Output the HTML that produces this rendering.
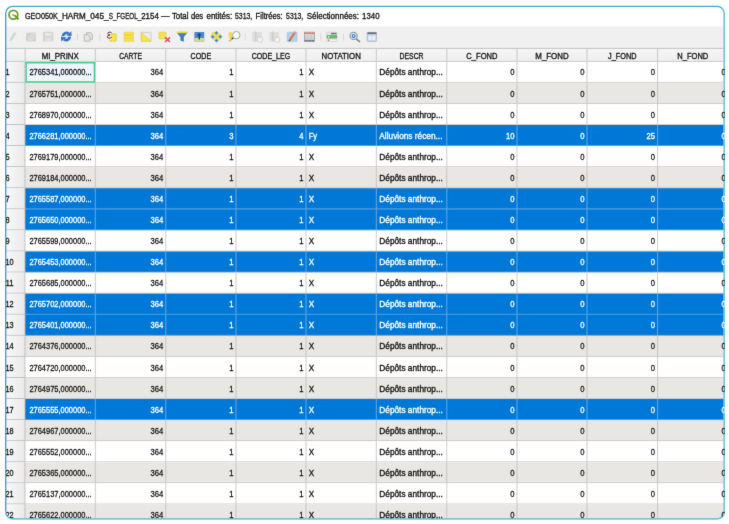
<!DOCTYPE html>
<html><head><meta charset="utf-8"><title>Table attributaire</title>
<style>
html,body{margin:0;padding:0;background:#fff;}
body{width:729px;height:524px;overflow:hidden;}
svg{display:block;}
text{font-family:"Liberation Sans","DejaVu Sans",sans-serif;font-size:9.0px;fill:#151515;stroke:#151515;stroke-width:0.34px;}
.w{fill:#fff;stroke:#fff;}
.n{font-size:9.5px;fill:#161616;stroke:#161616;stroke-width:0.3px;}
.n.w{fill:#fff;stroke:#fff;stroke-width:0.34px;}
.hd{fill:#151515;stroke:#151515;stroke-width:0.34px;}
</style></head><body>
<svg width="729" height="524" viewBox="0 0 729 524">
<defs>
<clipPath id="cl"><rect x="6.2" y="6.8" width="717.6" height="511.8" rx="6.8"/></clipPath>
<clipPath id="ct"><rect x="6.2" y="6.8" width="718.4" height="511.8" rx="6.8"/></clipPath>
<linearGradient id="rh" x1="0" x2="1" y1="0" y2="0"><stop offset="0.3" stop-color="#f7f7f7"/><stop offset="1" stop-color="#eaeaea"/></linearGradient>
<linearGradient id="hg" x1="0" x2="0" y1="0" y2="1"><stop offset="0" stop-color="#f6f6f6"/><stop offset="1" stop-color="#eeeeee"/></linearGradient>
</defs>
<filter id="bl" x="-6" y="-6" width="741" height="536" filterUnits="userSpaceOnUse" color-interpolation-filters="sRGB"><feConvolveMatrix order="3" kernelMatrix="0.0074 0.0713 0.0074 0.0713 0.6853 0.0713 0.0074 0.0713 0.0074" divisor="1" edgeMode="duplicate" preserveAlpha="true"/></filter>
<rect width="729" height="524" fill="#fff"/>
<g filter="url(#bl)">
<rect x="-6" y="-6" width="741" height="536" fill="#fff"/>
<g clip-path="url(#cl)">
<rect x="0" y="0" width="729" height="26.5" fill="#fff"/>
<rect x="0" y="26.5" width="729" height="21.6" fill="#f0f0f0"/>

<rect x="0" y="48.0" width="729" height="13.8" fill="url(#hg)"/>
<rect x="0" y="47.9" width="729" height="0.9" fill="#bdbdbd"/>
<rect x="0" y="60.95" width="729" height="0.9" fill="#b9b9b9"/>
<rect x="24.7" y="48.6" width="1" height="12.6" fill="#c6c6c6"/>
<rect x="94.8" y="48.6" width="1" height="12.6" fill="#c6c6c6"/>
<rect x="165.3" y="48.6" width="1" height="12.6" fill="#c6c6c6"/>
<rect x="235.5" y="48.6" width="1" height="12.6" fill="#c6c6c6"/>
<rect x="305.5" y="48.6" width="1" height="12.6" fill="#c6c6c6"/>
<rect x="375.8" y="48.6" width="1" height="12.6" fill="#c6c6c6"/>
<rect x="446.3" y="48.6" width="1" height="12.6" fill="#c6c6c6"/>
<rect x="516.5" y="48.6" width="1" height="12.6" fill="#c6c6c6"/>
<rect x="586.5" y="48.6" width="1" height="12.6" fill="#c6c6c6"/>
<rect x="657.1" y="48.6" width="1" height="12.6" fill="#c6c6c6"/>
<rect x="25" y="61.75" width="704" height="21.13" fill="#ffffff"/>
<rect x="0" y="61.75" width="25" height="21.13" fill="url(#rh)"/>
<rect x="0" y="81.93" width="25" height="0.9" fill="#bcbcbc"/>
<rect x="25.4" y="81.93" width="704" height="0.9" fill="#cccccc"/>
<rect x="94.8" y="61.75" width="1" height="21.08" fill="#cccccc"/>
<rect x="165.3" y="61.75" width="1" height="21.08" fill="#cccccc"/>
<rect x="235.5" y="61.75" width="1" height="21.08" fill="#cccccc"/>
<rect x="305.5" y="61.75" width="1" height="21.08" fill="#cccccc"/>
<rect x="375.8" y="61.75" width="1" height="21.08" fill="#cccccc"/>
<rect x="446.3" y="61.75" width="1" height="21.08" fill="#cccccc"/>
<rect x="516.5" y="61.75" width="1" height="21.08" fill="#cccccc"/>
<rect x="586.5" y="61.75" width="1" height="21.08" fill="#cccccc"/>
<rect x="657.1" y="61.75" width="1" height="21.08" fill="#cccccc"/>
<rect x="25" y="82.83" width="704" height="21.13" fill="#e9e7e3"/>
<rect x="0" y="82.83" width="25" height="21.13" fill="url(#rh)"/>
<rect x="0" y="103.01" width="25" height="0.9" fill="#bcbcbc"/>
<rect x="25.4" y="103.01" width="704" height="0.9" fill="#c6c5c2"/>
<rect x="94.8" y="82.83" width="1" height="21.08" fill="#c6c5c2"/>
<rect x="165.3" y="82.83" width="1" height="21.08" fill="#c6c5c2"/>
<rect x="235.5" y="82.83" width="1" height="21.08" fill="#c6c5c2"/>
<rect x="305.5" y="82.83" width="1" height="21.08" fill="#c6c5c2"/>
<rect x="375.8" y="82.83" width="1" height="21.08" fill="#c6c5c2"/>
<rect x="446.3" y="82.83" width="1" height="21.08" fill="#c6c5c2"/>
<rect x="516.5" y="82.83" width="1" height="21.08" fill="#c6c5c2"/>
<rect x="586.5" y="82.83" width="1" height="21.08" fill="#c6c5c2"/>
<rect x="657.1" y="82.83" width="1" height="21.08" fill="#c6c5c2"/>
<rect x="25" y="103.91" width="704" height="21.13" fill="#ffffff"/>
<rect x="0" y="103.91" width="25" height="21.13" fill="url(#rh)"/>
<rect x="0" y="124.09" width="25" height="0.9" fill="#bcbcbc"/>
<rect x="25.4" y="124.09" width="704" height="0.9" fill="#cccccc"/>
<rect x="94.8" y="103.91" width="1" height="21.08" fill="#cccccc"/>
<rect x="165.3" y="103.91" width="1" height="21.08" fill="#cccccc"/>
<rect x="235.5" y="103.91" width="1" height="21.08" fill="#cccccc"/>
<rect x="305.5" y="103.91" width="1" height="21.08" fill="#cccccc"/>
<rect x="375.8" y="103.91" width="1" height="21.08" fill="#cccccc"/>
<rect x="446.3" y="103.91" width="1" height="21.08" fill="#cccccc"/>
<rect x="516.5" y="103.91" width="1" height="21.08" fill="#cccccc"/>
<rect x="586.5" y="103.91" width="1" height="21.08" fill="#cccccc"/>
<rect x="657.1" y="103.91" width="1" height="21.08" fill="#cccccc"/>
<rect x="25" y="124.99" width="704" height="21.13" fill="#0078d7"/>
<rect x="0" y="124.99" width="25" height="21.13" fill="url(#rh)"/>
<rect x="0" y="145.17" width="25" height="0.9" fill="#bcbcbc"/>
<rect x="25.4" y="145.17" width="704" height="0.9" fill="#62a8e6"/>
<rect x="94.8" y="124.99" width="1" height="21.08" fill="#62a8e6"/>
<rect x="165.3" y="124.99" width="1" height="21.08" fill="#62a8e6"/>
<rect x="235.5" y="124.99" width="1" height="21.08" fill="#62a8e6"/>
<rect x="305.5" y="124.99" width="1" height="21.08" fill="#62a8e6"/>
<rect x="375.8" y="124.99" width="1" height="21.08" fill="#62a8e6"/>
<rect x="446.3" y="124.99" width="1" height="21.08" fill="#62a8e6"/>
<rect x="516.5" y="124.99" width="1" height="21.08" fill="#62a8e6"/>
<rect x="586.5" y="124.99" width="1" height="21.08" fill="#62a8e6"/>
<rect x="657.1" y="124.99" width="1" height="21.08" fill="#62a8e6"/>
<rect x="25" y="146.07" width="704" height="21.13" fill="#ffffff"/>
<rect x="0" y="146.07" width="25" height="21.13" fill="url(#rh)"/>
<rect x="0" y="166.25" width="25" height="0.9" fill="#bcbcbc"/>
<rect x="25.4" y="166.25" width="704" height="0.9" fill="#cccccc"/>
<rect x="94.8" y="146.07" width="1" height="21.08" fill="#cccccc"/>
<rect x="165.3" y="146.07" width="1" height="21.08" fill="#cccccc"/>
<rect x="235.5" y="146.07" width="1" height="21.08" fill="#cccccc"/>
<rect x="305.5" y="146.07" width="1" height="21.08" fill="#cccccc"/>
<rect x="375.8" y="146.07" width="1" height="21.08" fill="#cccccc"/>
<rect x="446.3" y="146.07" width="1" height="21.08" fill="#cccccc"/>
<rect x="516.5" y="146.07" width="1" height="21.08" fill="#cccccc"/>
<rect x="586.5" y="146.07" width="1" height="21.08" fill="#cccccc"/>
<rect x="657.1" y="146.07" width="1" height="21.08" fill="#cccccc"/>
<rect x="25" y="167.15" width="704" height="21.13" fill="#e9e7e3"/>
<rect x="0" y="167.15" width="25" height="21.13" fill="url(#rh)"/>
<rect x="0" y="187.33" width="25" height="0.9" fill="#bcbcbc"/>
<rect x="25.4" y="187.33" width="704" height="0.9" fill="#c6c5c2"/>
<rect x="94.8" y="167.15" width="1" height="21.08" fill="#c6c5c2"/>
<rect x="165.3" y="167.15" width="1" height="21.08" fill="#c6c5c2"/>
<rect x="235.5" y="167.15" width="1" height="21.08" fill="#c6c5c2"/>
<rect x="305.5" y="167.15" width="1" height="21.08" fill="#c6c5c2"/>
<rect x="375.8" y="167.15" width="1" height="21.08" fill="#c6c5c2"/>
<rect x="446.3" y="167.15" width="1" height="21.08" fill="#c6c5c2"/>
<rect x="516.5" y="167.15" width="1" height="21.08" fill="#c6c5c2"/>
<rect x="586.5" y="167.15" width="1" height="21.08" fill="#c6c5c2"/>
<rect x="657.1" y="167.15" width="1" height="21.08" fill="#c6c5c2"/>
<rect x="25" y="188.23" width="704" height="21.13" fill="#0078d7"/>
<rect x="0" y="188.23" width="25" height="21.13" fill="url(#rh)"/>
<rect x="0" y="208.41" width="25" height="0.9" fill="#bcbcbc"/>
<rect x="25.4" y="208.41" width="704" height="0.9" fill="#62a8e6"/>
<rect x="94.8" y="188.23" width="1" height="21.08" fill="#62a8e6"/>
<rect x="165.3" y="188.23" width="1" height="21.08" fill="#62a8e6"/>
<rect x="235.5" y="188.23" width="1" height="21.08" fill="#62a8e6"/>
<rect x="305.5" y="188.23" width="1" height="21.08" fill="#62a8e6"/>
<rect x="375.8" y="188.23" width="1" height="21.08" fill="#62a8e6"/>
<rect x="446.3" y="188.23" width="1" height="21.08" fill="#62a8e6"/>
<rect x="516.5" y="188.23" width="1" height="21.08" fill="#62a8e6"/>
<rect x="586.5" y="188.23" width="1" height="21.08" fill="#62a8e6"/>
<rect x="657.1" y="188.23" width="1" height="21.08" fill="#62a8e6"/>
<rect x="25" y="209.31" width="704" height="21.13" fill="#0078d7"/>
<rect x="0" y="209.31" width="25" height="21.13" fill="url(#rh)"/>
<rect x="0" y="229.49" width="25" height="0.9" fill="#bcbcbc"/>
<rect x="25.4" y="229.49" width="704" height="0.9" fill="#62a8e6"/>
<rect x="94.8" y="209.31" width="1" height="21.08" fill="#62a8e6"/>
<rect x="165.3" y="209.31" width="1" height="21.08" fill="#62a8e6"/>
<rect x="235.5" y="209.31" width="1" height="21.08" fill="#62a8e6"/>
<rect x="305.5" y="209.31" width="1" height="21.08" fill="#62a8e6"/>
<rect x="375.8" y="209.31" width="1" height="21.08" fill="#62a8e6"/>
<rect x="446.3" y="209.31" width="1" height="21.08" fill="#62a8e6"/>
<rect x="516.5" y="209.31" width="1" height="21.08" fill="#62a8e6"/>
<rect x="586.5" y="209.31" width="1" height="21.08" fill="#62a8e6"/>
<rect x="657.1" y="209.31" width="1" height="21.08" fill="#62a8e6"/>
<rect x="25" y="230.39" width="704" height="21.13" fill="#ffffff"/>
<rect x="0" y="230.39" width="25" height="21.13" fill="url(#rh)"/>
<rect x="0" y="250.57" width="25" height="0.9" fill="#bcbcbc"/>
<rect x="25.4" y="250.57" width="704" height="0.9" fill="#cccccc"/>
<rect x="94.8" y="230.39" width="1" height="21.08" fill="#cccccc"/>
<rect x="165.3" y="230.39" width="1" height="21.08" fill="#cccccc"/>
<rect x="235.5" y="230.39" width="1" height="21.08" fill="#cccccc"/>
<rect x="305.5" y="230.39" width="1" height="21.08" fill="#cccccc"/>
<rect x="375.8" y="230.39" width="1" height="21.08" fill="#cccccc"/>
<rect x="446.3" y="230.39" width="1" height="21.08" fill="#cccccc"/>
<rect x="516.5" y="230.39" width="1" height="21.08" fill="#cccccc"/>
<rect x="586.5" y="230.39" width="1" height="21.08" fill="#cccccc"/>
<rect x="657.1" y="230.39" width="1" height="21.08" fill="#cccccc"/>
<rect x="25" y="251.47" width="704" height="21.13" fill="#0078d7"/>
<rect x="0" y="251.47" width="25" height="21.13" fill="url(#rh)"/>
<rect x="0" y="271.65" width="25" height="0.9" fill="#bcbcbc"/>
<rect x="25.4" y="271.65" width="704" height="0.9" fill="#62a8e6"/>
<rect x="94.8" y="251.47" width="1" height="21.08" fill="#62a8e6"/>
<rect x="165.3" y="251.47" width="1" height="21.08" fill="#62a8e6"/>
<rect x="235.5" y="251.47" width="1" height="21.08" fill="#62a8e6"/>
<rect x="305.5" y="251.47" width="1" height="21.08" fill="#62a8e6"/>
<rect x="375.8" y="251.47" width="1" height="21.08" fill="#62a8e6"/>
<rect x="446.3" y="251.47" width="1" height="21.08" fill="#62a8e6"/>
<rect x="516.5" y="251.47" width="1" height="21.08" fill="#62a8e6"/>
<rect x="586.5" y="251.47" width="1" height="21.08" fill="#62a8e6"/>
<rect x="657.1" y="251.47" width="1" height="21.08" fill="#62a8e6"/>
<rect x="25" y="272.55" width="704" height="21.13" fill="#ffffff"/>
<rect x="0" y="272.55" width="25" height="21.13" fill="url(#rh)"/>
<rect x="0" y="292.73" width="25" height="0.9" fill="#bcbcbc"/>
<rect x="25.4" y="292.73" width="704" height="0.9" fill="#cccccc"/>
<rect x="94.8" y="272.55" width="1" height="21.08" fill="#cccccc"/>
<rect x="165.3" y="272.55" width="1" height="21.08" fill="#cccccc"/>
<rect x="235.5" y="272.55" width="1" height="21.08" fill="#cccccc"/>
<rect x="305.5" y="272.55" width="1" height="21.08" fill="#cccccc"/>
<rect x="375.8" y="272.55" width="1" height="21.08" fill="#cccccc"/>
<rect x="446.3" y="272.55" width="1" height="21.08" fill="#cccccc"/>
<rect x="516.5" y="272.55" width="1" height="21.08" fill="#cccccc"/>
<rect x="586.5" y="272.55" width="1" height="21.08" fill="#cccccc"/>
<rect x="657.1" y="272.55" width="1" height="21.08" fill="#cccccc"/>
<rect x="25" y="293.63" width="704" height="21.13" fill="#0078d7"/>
<rect x="0" y="293.63" width="25" height="21.13" fill="url(#rh)"/>
<rect x="0" y="313.81" width="25" height="0.9" fill="#bcbcbc"/>
<rect x="25.4" y="313.81" width="704" height="0.9" fill="#62a8e6"/>
<rect x="94.8" y="293.63" width="1" height="21.08" fill="#62a8e6"/>
<rect x="165.3" y="293.63" width="1" height="21.08" fill="#62a8e6"/>
<rect x="235.5" y="293.63" width="1" height="21.08" fill="#62a8e6"/>
<rect x="305.5" y="293.63" width="1" height="21.08" fill="#62a8e6"/>
<rect x="375.8" y="293.63" width="1" height="21.08" fill="#62a8e6"/>
<rect x="446.3" y="293.63" width="1" height="21.08" fill="#62a8e6"/>
<rect x="516.5" y="293.63" width="1" height="21.08" fill="#62a8e6"/>
<rect x="586.5" y="293.63" width="1" height="21.08" fill="#62a8e6"/>
<rect x="657.1" y="293.63" width="1" height="21.08" fill="#62a8e6"/>
<rect x="25" y="314.71" width="704" height="21.13" fill="#0078d7"/>
<rect x="0" y="314.71" width="25" height="21.13" fill="url(#rh)"/>
<rect x="0" y="334.89" width="25" height="0.9" fill="#bcbcbc"/>
<rect x="25.4" y="334.89" width="704" height="0.9" fill="#62a8e6"/>
<rect x="94.8" y="314.71" width="1" height="21.08" fill="#62a8e6"/>
<rect x="165.3" y="314.71" width="1" height="21.08" fill="#62a8e6"/>
<rect x="235.5" y="314.71" width="1" height="21.08" fill="#62a8e6"/>
<rect x="305.5" y="314.71" width="1" height="21.08" fill="#62a8e6"/>
<rect x="375.8" y="314.71" width="1" height="21.08" fill="#62a8e6"/>
<rect x="446.3" y="314.71" width="1" height="21.08" fill="#62a8e6"/>
<rect x="516.5" y="314.71" width="1" height="21.08" fill="#62a8e6"/>
<rect x="586.5" y="314.71" width="1" height="21.08" fill="#62a8e6"/>
<rect x="657.1" y="314.71" width="1" height="21.08" fill="#62a8e6"/>
<rect x="25" y="335.79" width="704" height="21.13" fill="#e9e7e3"/>
<rect x="0" y="335.79" width="25" height="21.13" fill="url(#rh)"/>
<rect x="0" y="355.97" width="25" height="0.9" fill="#bcbcbc"/>
<rect x="25.4" y="355.97" width="704" height="0.9" fill="#c6c5c2"/>
<rect x="94.8" y="335.79" width="1" height="21.08" fill="#c6c5c2"/>
<rect x="165.3" y="335.79" width="1" height="21.08" fill="#c6c5c2"/>
<rect x="235.5" y="335.79" width="1" height="21.08" fill="#c6c5c2"/>
<rect x="305.5" y="335.79" width="1" height="21.08" fill="#c6c5c2"/>
<rect x="375.8" y="335.79" width="1" height="21.08" fill="#c6c5c2"/>
<rect x="446.3" y="335.79" width="1" height="21.08" fill="#c6c5c2"/>
<rect x="516.5" y="335.79" width="1" height="21.08" fill="#c6c5c2"/>
<rect x="586.5" y="335.79" width="1" height="21.08" fill="#c6c5c2"/>
<rect x="657.1" y="335.79" width="1" height="21.08" fill="#c6c5c2"/>
<rect x="25" y="356.87" width="704" height="21.13" fill="#ffffff"/>
<rect x="0" y="356.87" width="25" height="21.13" fill="url(#rh)"/>
<rect x="0" y="377.05" width="25" height="0.9" fill="#bcbcbc"/>
<rect x="25.4" y="377.05" width="704" height="0.9" fill="#cccccc"/>
<rect x="94.8" y="356.87" width="1" height="21.08" fill="#cccccc"/>
<rect x="165.3" y="356.87" width="1" height="21.08" fill="#cccccc"/>
<rect x="235.5" y="356.87" width="1" height="21.08" fill="#cccccc"/>
<rect x="305.5" y="356.87" width="1" height="21.08" fill="#cccccc"/>
<rect x="375.8" y="356.87" width="1" height="21.08" fill="#cccccc"/>
<rect x="446.3" y="356.87" width="1" height="21.08" fill="#cccccc"/>
<rect x="516.5" y="356.87" width="1" height="21.08" fill="#cccccc"/>
<rect x="586.5" y="356.87" width="1" height="21.08" fill="#cccccc"/>
<rect x="657.1" y="356.87" width="1" height="21.08" fill="#cccccc"/>
<rect x="25" y="377.95" width="704" height="21.13" fill="#e9e7e3"/>
<rect x="0" y="377.95" width="25" height="21.13" fill="url(#rh)"/>
<rect x="0" y="398.13" width="25" height="0.9" fill="#bcbcbc"/>
<rect x="25.4" y="398.13" width="704" height="0.9" fill="#c6c5c2"/>
<rect x="94.8" y="377.95" width="1" height="21.08" fill="#c6c5c2"/>
<rect x="165.3" y="377.95" width="1" height="21.08" fill="#c6c5c2"/>
<rect x="235.5" y="377.95" width="1" height="21.08" fill="#c6c5c2"/>
<rect x="305.5" y="377.95" width="1" height="21.08" fill="#c6c5c2"/>
<rect x="375.8" y="377.95" width="1" height="21.08" fill="#c6c5c2"/>
<rect x="446.3" y="377.95" width="1" height="21.08" fill="#c6c5c2"/>
<rect x="516.5" y="377.95" width="1" height="21.08" fill="#c6c5c2"/>
<rect x="586.5" y="377.95" width="1" height="21.08" fill="#c6c5c2"/>
<rect x="657.1" y="377.95" width="1" height="21.08" fill="#c6c5c2"/>
<rect x="25" y="399.03" width="704" height="21.13" fill="#0078d7"/>
<rect x="0" y="399.03" width="25" height="21.13" fill="url(#rh)"/>
<rect x="0" y="419.21" width="25" height="0.9" fill="#bcbcbc"/>
<rect x="25.4" y="419.21" width="704" height="0.9" fill="#62a8e6"/>
<rect x="94.8" y="399.03" width="1" height="21.08" fill="#62a8e6"/>
<rect x="165.3" y="399.03" width="1" height="21.08" fill="#62a8e6"/>
<rect x="235.5" y="399.03" width="1" height="21.08" fill="#62a8e6"/>
<rect x="305.5" y="399.03" width="1" height="21.08" fill="#62a8e6"/>
<rect x="375.8" y="399.03" width="1" height="21.08" fill="#62a8e6"/>
<rect x="446.3" y="399.03" width="1" height="21.08" fill="#62a8e6"/>
<rect x="516.5" y="399.03" width="1" height="21.08" fill="#62a8e6"/>
<rect x="586.5" y="399.03" width="1" height="21.08" fill="#62a8e6"/>
<rect x="657.1" y="399.03" width="1" height="21.08" fill="#62a8e6"/>
<rect x="25" y="420.11" width="704" height="21.13" fill="#e9e7e3"/>
<rect x="0" y="420.11" width="25" height="21.13" fill="url(#rh)"/>
<rect x="0" y="440.29" width="25" height="0.9" fill="#bcbcbc"/>
<rect x="25.4" y="440.29" width="704" height="0.9" fill="#c6c5c2"/>
<rect x="94.8" y="420.11" width="1" height="21.08" fill="#c6c5c2"/>
<rect x="165.3" y="420.11" width="1" height="21.08" fill="#c6c5c2"/>
<rect x="235.5" y="420.11" width="1" height="21.08" fill="#c6c5c2"/>
<rect x="305.5" y="420.11" width="1" height="21.08" fill="#c6c5c2"/>
<rect x="375.8" y="420.11" width="1" height="21.08" fill="#c6c5c2"/>
<rect x="446.3" y="420.11" width="1" height="21.08" fill="#c6c5c2"/>
<rect x="516.5" y="420.11" width="1" height="21.08" fill="#c6c5c2"/>
<rect x="586.5" y="420.11" width="1" height="21.08" fill="#c6c5c2"/>
<rect x="657.1" y="420.11" width="1" height="21.08" fill="#c6c5c2"/>
<rect x="25" y="441.19" width="704" height="21.13" fill="#ffffff"/>
<rect x="0" y="441.19" width="25" height="21.13" fill="url(#rh)"/>
<rect x="0" y="461.37" width="25" height="0.9" fill="#bcbcbc"/>
<rect x="25.4" y="461.37" width="704" height="0.9" fill="#cccccc"/>
<rect x="94.8" y="441.19" width="1" height="21.08" fill="#cccccc"/>
<rect x="165.3" y="441.19" width="1" height="21.08" fill="#cccccc"/>
<rect x="235.5" y="441.19" width="1" height="21.08" fill="#cccccc"/>
<rect x="305.5" y="441.19" width="1" height="21.08" fill="#cccccc"/>
<rect x="375.8" y="441.19" width="1" height="21.08" fill="#cccccc"/>
<rect x="446.3" y="441.19" width="1" height="21.08" fill="#cccccc"/>
<rect x="516.5" y="441.19" width="1" height="21.08" fill="#cccccc"/>
<rect x="586.5" y="441.19" width="1" height="21.08" fill="#cccccc"/>
<rect x="657.1" y="441.19" width="1" height="21.08" fill="#cccccc"/>
<rect x="25" y="462.27" width="704" height="21.13" fill="#e9e7e3"/>
<rect x="0" y="462.27" width="25" height="21.13" fill="url(#rh)"/>
<rect x="0" y="482.45" width="25" height="0.9" fill="#bcbcbc"/>
<rect x="25.4" y="482.45" width="704" height="0.9" fill="#c6c5c2"/>
<rect x="94.8" y="462.27" width="1" height="21.08" fill="#c6c5c2"/>
<rect x="165.3" y="462.27" width="1" height="21.08" fill="#c6c5c2"/>
<rect x="235.5" y="462.27" width="1" height="21.08" fill="#c6c5c2"/>
<rect x="305.5" y="462.27" width="1" height="21.08" fill="#c6c5c2"/>
<rect x="375.8" y="462.27" width="1" height="21.08" fill="#c6c5c2"/>
<rect x="446.3" y="462.27" width="1" height="21.08" fill="#c6c5c2"/>
<rect x="516.5" y="462.27" width="1" height="21.08" fill="#c6c5c2"/>
<rect x="586.5" y="462.27" width="1" height="21.08" fill="#c6c5c2"/>
<rect x="657.1" y="462.27" width="1" height="21.08" fill="#c6c5c2"/>
<rect x="25" y="483.35" width="704" height="21.13" fill="#ffffff"/>
<rect x="0" y="483.35" width="25" height="21.13" fill="url(#rh)"/>
<rect x="0" y="503.53" width="25" height="0.9" fill="#bcbcbc"/>
<rect x="25.4" y="503.53" width="704" height="0.9" fill="#cccccc"/>
<rect x="94.8" y="483.35" width="1" height="21.08" fill="#cccccc"/>
<rect x="165.3" y="483.35" width="1" height="21.08" fill="#cccccc"/>
<rect x="235.5" y="483.35" width="1" height="21.08" fill="#cccccc"/>
<rect x="305.5" y="483.35" width="1" height="21.08" fill="#cccccc"/>
<rect x="375.8" y="483.35" width="1" height="21.08" fill="#cccccc"/>
<rect x="446.3" y="483.35" width="1" height="21.08" fill="#cccccc"/>
<rect x="516.5" y="483.35" width="1" height="21.08" fill="#cccccc"/>
<rect x="586.5" y="483.35" width="1" height="21.08" fill="#cccccc"/>
<rect x="657.1" y="483.35" width="1" height="21.08" fill="#cccccc"/>
<rect x="25" y="504.43" width="704" height="21.13" fill="#e9e7e3"/>
<rect x="0" y="504.43" width="25" height="21.13" fill="url(#rh)"/>
<rect x="0" y="524.61" width="25" height="0.9" fill="#bcbcbc"/>
<rect x="25.4" y="524.61" width="704" height="0.9" fill="#c6c5c2"/>
<rect x="94.8" y="504.43" width="1" height="21.08" fill="#c6c5c2"/>
<rect x="165.3" y="504.43" width="1" height="21.08" fill="#c6c5c2"/>
<rect x="235.5" y="504.43" width="1" height="21.08" fill="#c6c5c2"/>
<rect x="305.5" y="504.43" width="1" height="21.08" fill="#c6c5c2"/>
<rect x="375.8" y="504.43" width="1" height="21.08" fill="#c6c5c2"/>
<rect x="446.3" y="504.43" width="1" height="21.08" fill="#c6c5c2"/>
<rect x="516.5" y="504.43" width="1" height="21.08" fill="#c6c5c2"/>
<rect x="586.5" y="504.43" width="1" height="21.08" fill="#c6c5c2"/>
<rect x="657.1" y="504.43" width="1" height="21.08" fill="#c6c5c2"/>
<rect x="24.5" y="61.8" width="0.9" height="470" fill="#bcbcbc"/>
<rect x="26.1" y="62.75" width="68.3" height="19.18" fill="#f0f6ff" stroke="#3fd28d" stroke-width="1.5"/>
</g>
<path d="M5.7 511.85 V13.35 A7.0 7.0 0 0 1 12.7 6.35 H717.2 A7.0 7.0 0 0 1 722.15 8.40" fill="none" stroke="#33adc8" stroke-width="1.4"/>
<path d="M722.15 8.40 A7.0 7.0 0 0 1 724.2 13.35 V511.85 A7.0 7.0 0 0 1 717.2 518.85 H12.7 A7.0 7.0 0 0 1 5.7 511.85" fill="none" stroke="#6fc8dd" stroke-width="1.7"/>
<g clip-path="url(#ct)">
<text y="18.65"><tspan x="24.9" textLength="37.1" lengthAdjust="spacingAndGlyphs">GEO050K_</tspan><tspan x="62.0" textLength="28.2" lengthAdjust="spacingAndGlyphs">HARM_</tspan><tspan x="90.2" textLength="18.5" lengthAdjust="spacingAndGlyphs">045_</tspan><tspan x="108.7" textLength="7.8" lengthAdjust="spacingAndGlyphs">S_</tspan><tspan x="116.5" textLength="24.7" lengthAdjust="spacingAndGlyphs">FGEOL_</tspan><tspan x="141.2" textLength="17.6" lengthAdjust="spacingAndGlyphs">2154</tspan> <tspan x="161.2" textLength="8.2" lengthAdjust="spacingAndGlyphs">—</tspan> <tspan x="171.9" textLength="16.5" lengthAdjust="spacingAndGlyphs">Total</tspan> <tspan x="190.9" textLength="12.3" lengthAdjust="spacingAndGlyphs">des</tspan> <tspan x="206.5" textLength="25.7" lengthAdjust="spacingAndGlyphs">entités:</tspan> <tspan x="235.0" textLength="17.3" lengthAdjust="spacingAndGlyphs">5313,</tspan> <tspan x="255.6" textLength="27.1" lengthAdjust="spacingAndGlyphs">Filtrées:</tspan> <tspan x="286.1" textLength="17.1" lengthAdjust="spacingAndGlyphs">5313,</tspan> <tspan x="306.7" textLength="52.3" lengthAdjust="spacingAndGlyphs">Sélectionnées:</tspan> <tspan x="362.1" textLength="17.4" lengthAdjust="spacingAndGlyphs">1340</tspan></text>
<text x="41.75" y="58.60" textLength="37.00" lengthAdjust="spacingAndGlyphs" class="hd">MI_PRINX</text>
<text x="119.20" y="58.60" textLength="22.70" lengthAdjust="spacingAndGlyphs" class="hd">CARTE</text>
<text x="190.60" y="58.60" textLength="20.60" lengthAdjust="spacingAndGlyphs" class="hd">CODE</text>
<text x="251.65" y="58.60" textLength="38.70" lengthAdjust="spacingAndGlyphs" class="hd">CODE_LEG</text>
<text x="321.50" y="58.60" textLength="39.30" lengthAdjust="spacingAndGlyphs" class="hd">NOTATION</text>
<text x="399.55" y="58.60" textLength="24.00" lengthAdjust="spacingAndGlyphs" class="hd">DESCR</text>
<text x="466.30" y="58.60" textLength="31.20" lengthAdjust="spacingAndGlyphs" class="hd">C_FOND</text>
<text x="535.35" y="58.60" textLength="33.30" lengthAdjust="spacingAndGlyphs" class="hd">M_FOND</text>
<text x="608.10" y="58.60" textLength="28.40" lengthAdjust="spacingAndGlyphs" class="hd">J_FOND</text>
<text x="677.30" y="58.60" textLength="31.00" lengthAdjust="spacingAndGlyphs" class="hd">N_FOND</text>
<text x="5.40" y="75.00" textLength="4.07" lengthAdjust="spacingAndGlyphs" class="n">1</text>
<text x="29.40" y="75.00" textLength="62.30" lengthAdjust="spacingAndGlyphs" class="n">2765341,000000...</text>
<text x="150.45" y="75.00" textLength="12.75" lengthAdjust="spacingAndGlyphs" class="n">364</text>
<text x="229.15" y="75.00" textLength="4.25" lengthAdjust="spacingAndGlyphs" class="n">1</text>
<text x="299.15" y="75.00" textLength="4.25" lengthAdjust="spacingAndGlyphs" class="n">1</text>
<text x="308.70" y="75.00" textLength="5.40" lengthAdjust="spacingAndGlyphs">X</text>
<text x="379.30" y="75.00" textLength="63.60" lengthAdjust="spacingAndGlyphs">Dépôts anthrop...</text>
<text x="510.15" y="75.00" textLength="4.25" lengthAdjust="spacingAndGlyphs" class="n">0</text>
<text x="580.15" y="75.00" textLength="4.25" lengthAdjust="spacingAndGlyphs" class="n">0</text>
<text x="650.75" y="75.00" textLength="4.25" lengthAdjust="spacingAndGlyphs" class="n">0</text>
<text x="721.55" y="75.00" textLength="4.25" lengthAdjust="spacingAndGlyphs" class="n">0</text>
<text x="5.40" y="97.00" textLength="4.07" lengthAdjust="spacingAndGlyphs" class="n">2</text>
<text x="29.40" y="97.00" textLength="62.30" lengthAdjust="spacingAndGlyphs" class="n">2765751,000000...</text>
<text x="150.45" y="97.00" textLength="12.75" lengthAdjust="spacingAndGlyphs" class="n">364</text>
<text x="229.15" y="97.00" textLength="4.25" lengthAdjust="spacingAndGlyphs" class="n">1</text>
<text x="299.15" y="97.00" textLength="4.25" lengthAdjust="spacingAndGlyphs" class="n">1</text>
<text x="308.70" y="97.00" textLength="5.40" lengthAdjust="spacingAndGlyphs">X</text>
<text x="379.30" y="97.00" textLength="63.60" lengthAdjust="spacingAndGlyphs">Dépôts anthrop...</text>
<text x="510.15" y="97.00" textLength="4.25" lengthAdjust="spacingAndGlyphs" class="n">0</text>
<text x="580.15" y="97.00" textLength="4.25" lengthAdjust="spacingAndGlyphs" class="n">0</text>
<text x="650.75" y="97.00" textLength="4.25" lengthAdjust="spacingAndGlyphs" class="n">0</text>
<text x="721.55" y="97.00" textLength="4.25" lengthAdjust="spacingAndGlyphs" class="n">0</text>
<text x="5.40" y="118.00" textLength="4.07" lengthAdjust="spacingAndGlyphs" class="n">3</text>
<text x="29.40" y="118.00" textLength="62.30" lengthAdjust="spacingAndGlyphs" class="n">2768970,000000...</text>
<text x="150.45" y="118.00" textLength="12.75" lengthAdjust="spacingAndGlyphs" class="n">364</text>
<text x="229.15" y="118.00" textLength="4.25" lengthAdjust="spacingAndGlyphs" class="n">1</text>
<text x="299.15" y="118.00" textLength="4.25" lengthAdjust="spacingAndGlyphs" class="n">1</text>
<text x="308.70" y="118.00" textLength="5.40" lengthAdjust="spacingAndGlyphs">X</text>
<text x="379.30" y="118.00" textLength="63.60" lengthAdjust="spacingAndGlyphs">Dépôts anthrop...</text>
<text x="510.15" y="118.00" textLength="4.25" lengthAdjust="spacingAndGlyphs" class="n">0</text>
<text x="580.15" y="118.00" textLength="4.25" lengthAdjust="spacingAndGlyphs" class="n">0</text>
<text x="650.75" y="118.00" textLength="4.25" lengthAdjust="spacingAndGlyphs" class="n">0</text>
<text x="721.55" y="118.00" textLength="4.25" lengthAdjust="spacingAndGlyphs" class="n">0</text>
<text x="5.40" y="139.00" textLength="4.07" lengthAdjust="spacingAndGlyphs" class="n">4</text>
<text x="29.40" y="139.00" textLength="62.30" lengthAdjust="spacingAndGlyphs" class="n w">2766281,000000...</text>
<text x="150.45" y="139.00" textLength="12.75" lengthAdjust="spacingAndGlyphs" class="n w">364</text>
<text x="229.15" y="139.00" textLength="4.25" lengthAdjust="spacingAndGlyphs" class="n w">3</text>
<text x="299.15" y="139.00" textLength="4.25" lengthAdjust="spacingAndGlyphs" class="n w">4</text>
<text x="308.70" y="139.00" textLength="8.40" lengthAdjust="spacingAndGlyphs" class="w">Fy</text>
<text x="379.30" y="139.00" textLength="63.20" lengthAdjust="spacingAndGlyphs" class="w">Alluvions récen...</text>
<text x="505.90" y="139.00" textLength="8.50" lengthAdjust="spacingAndGlyphs" class="n w">10</text>
<text x="580.15" y="139.00" textLength="4.25" lengthAdjust="spacingAndGlyphs" class="n w">0</text>
<text x="646.50" y="139.00" textLength="8.50" lengthAdjust="spacingAndGlyphs" class="n w">25</text>
<text x="721.55" y="139.00" textLength="4.25" lengthAdjust="spacingAndGlyphs" class="n w">0</text>
<text x="5.40" y="160.00" textLength="4.07" lengthAdjust="spacingAndGlyphs" class="n">5</text>
<text x="29.40" y="160.00" textLength="62.30" lengthAdjust="spacingAndGlyphs" class="n">2769179,000000...</text>
<text x="150.45" y="160.00" textLength="12.75" lengthAdjust="spacingAndGlyphs" class="n">364</text>
<text x="229.15" y="160.00" textLength="4.25" lengthAdjust="spacingAndGlyphs" class="n">1</text>
<text x="299.15" y="160.00" textLength="4.25" lengthAdjust="spacingAndGlyphs" class="n">1</text>
<text x="308.70" y="160.00" textLength="5.40" lengthAdjust="spacingAndGlyphs">X</text>
<text x="379.30" y="160.00" textLength="63.60" lengthAdjust="spacingAndGlyphs">Dépôts anthrop...</text>
<text x="510.15" y="160.00" textLength="4.25" lengthAdjust="spacingAndGlyphs" class="n">0</text>
<text x="580.15" y="160.00" textLength="4.25" lengthAdjust="spacingAndGlyphs" class="n">0</text>
<text x="650.75" y="160.00" textLength="4.25" lengthAdjust="spacingAndGlyphs" class="n">0</text>
<text x="721.55" y="160.00" textLength="4.25" lengthAdjust="spacingAndGlyphs" class="n">0</text>
<text x="5.40" y="181.00" textLength="4.07" lengthAdjust="spacingAndGlyphs" class="n">6</text>
<text x="29.40" y="181.00" textLength="62.30" lengthAdjust="spacingAndGlyphs" class="n">2769184,000000...</text>
<text x="150.45" y="181.00" textLength="12.75" lengthAdjust="spacingAndGlyphs" class="n">364</text>
<text x="229.15" y="181.00" textLength="4.25" lengthAdjust="spacingAndGlyphs" class="n">1</text>
<text x="299.15" y="181.00" textLength="4.25" lengthAdjust="spacingAndGlyphs" class="n">1</text>
<text x="308.70" y="181.00" textLength="5.40" lengthAdjust="spacingAndGlyphs">X</text>
<text x="379.30" y="181.00" textLength="63.60" lengthAdjust="spacingAndGlyphs">Dépôts anthrop...</text>
<text x="510.15" y="181.00" textLength="4.25" lengthAdjust="spacingAndGlyphs" class="n">0</text>
<text x="580.15" y="181.00" textLength="4.25" lengthAdjust="spacingAndGlyphs" class="n">0</text>
<text x="650.75" y="181.00" textLength="4.25" lengthAdjust="spacingAndGlyphs" class="n">0</text>
<text x="721.55" y="181.00" textLength="4.25" lengthAdjust="spacingAndGlyphs" class="n">0</text>
<text x="5.40" y="202.00" textLength="4.07" lengthAdjust="spacingAndGlyphs" class="n">7</text>
<text x="29.40" y="202.00" textLength="62.30" lengthAdjust="spacingAndGlyphs" class="n w">2765587,000000...</text>
<text x="150.45" y="202.00" textLength="12.75" lengthAdjust="spacingAndGlyphs" class="n w">364</text>
<text x="229.15" y="202.00" textLength="4.25" lengthAdjust="spacingAndGlyphs" class="n w">1</text>
<text x="299.15" y="202.00" textLength="4.25" lengthAdjust="spacingAndGlyphs" class="n w">1</text>
<text x="308.70" y="202.00" textLength="5.40" lengthAdjust="spacingAndGlyphs" class="w">X</text>
<text x="379.30" y="202.00" textLength="63.60" lengthAdjust="spacingAndGlyphs" class="w">Dépôts anthrop...</text>
<text x="510.15" y="202.00" textLength="4.25" lengthAdjust="spacingAndGlyphs" class="n w">0</text>
<text x="580.15" y="202.00" textLength="4.25" lengthAdjust="spacingAndGlyphs" class="n w">0</text>
<text x="650.75" y="202.00" textLength="4.25" lengthAdjust="spacingAndGlyphs" class="n w">0</text>
<text x="721.55" y="202.00" textLength="4.25" lengthAdjust="spacingAndGlyphs" class="n w">0</text>
<text x="5.40" y="223.00" textLength="4.07" lengthAdjust="spacingAndGlyphs" class="n">8</text>
<text x="29.40" y="223.00" textLength="62.30" lengthAdjust="spacingAndGlyphs" class="n w">2765650,000000...</text>
<text x="150.45" y="223.00" textLength="12.75" lengthAdjust="spacingAndGlyphs" class="n w">364</text>
<text x="229.15" y="223.00" textLength="4.25" lengthAdjust="spacingAndGlyphs" class="n w">1</text>
<text x="299.15" y="223.00" textLength="4.25" lengthAdjust="spacingAndGlyphs" class="n w">1</text>
<text x="308.70" y="223.00" textLength="5.40" lengthAdjust="spacingAndGlyphs" class="w">X</text>
<text x="379.30" y="223.00" textLength="63.60" lengthAdjust="spacingAndGlyphs" class="w">Dépôts anthrop...</text>
<text x="510.15" y="223.00" textLength="4.25" lengthAdjust="spacingAndGlyphs" class="n w">0</text>
<text x="580.15" y="223.00" textLength="4.25" lengthAdjust="spacingAndGlyphs" class="n w">0</text>
<text x="650.75" y="223.00" textLength="4.25" lengthAdjust="spacingAndGlyphs" class="n w">0</text>
<text x="721.55" y="223.00" textLength="4.25" lengthAdjust="spacingAndGlyphs" class="n w">0</text>
<text x="5.40" y="244.00" textLength="4.07" lengthAdjust="spacingAndGlyphs" class="n">9</text>
<text x="29.40" y="244.00" textLength="62.30" lengthAdjust="spacingAndGlyphs" class="n">2765599,000000...</text>
<text x="150.45" y="244.00" textLength="12.75" lengthAdjust="spacingAndGlyphs" class="n">364</text>
<text x="229.15" y="244.00" textLength="4.25" lengthAdjust="spacingAndGlyphs" class="n">1</text>
<text x="299.15" y="244.00" textLength="4.25" lengthAdjust="spacingAndGlyphs" class="n">1</text>
<text x="308.70" y="244.00" textLength="5.40" lengthAdjust="spacingAndGlyphs">X</text>
<text x="379.30" y="244.00" textLength="63.60" lengthAdjust="spacingAndGlyphs">Dépôts anthrop...</text>
<text x="510.15" y="244.00" textLength="4.25" lengthAdjust="spacingAndGlyphs" class="n">0</text>
<text x="580.15" y="244.00" textLength="4.25" lengthAdjust="spacingAndGlyphs" class="n">0</text>
<text x="650.75" y="244.00" textLength="4.25" lengthAdjust="spacingAndGlyphs" class="n">0</text>
<text x="721.55" y="244.00" textLength="4.25" lengthAdjust="spacingAndGlyphs" class="n">0</text>
<text x="5.40" y="265.00" textLength="8.14" lengthAdjust="spacingAndGlyphs" class="n">10</text>
<text x="29.40" y="265.00" textLength="62.30" lengthAdjust="spacingAndGlyphs" class="n w">2765453,000000...</text>
<text x="150.45" y="265.00" textLength="12.75" lengthAdjust="spacingAndGlyphs" class="n w">364</text>
<text x="229.15" y="265.00" textLength="4.25" lengthAdjust="spacingAndGlyphs" class="n w">1</text>
<text x="299.15" y="265.00" textLength="4.25" lengthAdjust="spacingAndGlyphs" class="n w">1</text>
<text x="308.70" y="265.00" textLength="5.40" lengthAdjust="spacingAndGlyphs" class="w">X</text>
<text x="379.30" y="265.00" textLength="63.60" lengthAdjust="spacingAndGlyphs" class="w">Dépôts anthrop...</text>
<text x="510.15" y="265.00" textLength="4.25" lengthAdjust="spacingAndGlyphs" class="n w">0</text>
<text x="580.15" y="265.00" textLength="4.25" lengthAdjust="spacingAndGlyphs" class="n w">0</text>
<text x="650.75" y="265.00" textLength="4.25" lengthAdjust="spacingAndGlyphs" class="n w">0</text>
<text x="721.55" y="265.00" textLength="4.25" lengthAdjust="spacingAndGlyphs" class="n w">0</text>
<text x="5.40" y="286.00" textLength="8.14" lengthAdjust="spacingAndGlyphs" class="n">11</text>
<text x="29.40" y="286.00" textLength="62.30" lengthAdjust="spacingAndGlyphs" class="n">2765685,000000...</text>
<text x="150.45" y="286.00" textLength="12.75" lengthAdjust="spacingAndGlyphs" class="n">364</text>
<text x="229.15" y="286.00" textLength="4.25" lengthAdjust="spacingAndGlyphs" class="n">1</text>
<text x="299.15" y="286.00" textLength="4.25" lengthAdjust="spacingAndGlyphs" class="n">1</text>
<text x="308.70" y="286.00" textLength="5.40" lengthAdjust="spacingAndGlyphs">X</text>
<text x="379.30" y="286.00" textLength="63.60" lengthAdjust="spacingAndGlyphs">Dépôts anthrop...</text>
<text x="510.15" y="286.00" textLength="4.25" lengthAdjust="spacingAndGlyphs" class="n">0</text>
<text x="580.15" y="286.00" textLength="4.25" lengthAdjust="spacingAndGlyphs" class="n">0</text>
<text x="650.75" y="286.00" textLength="4.25" lengthAdjust="spacingAndGlyphs" class="n">0</text>
<text x="721.55" y="286.00" textLength="4.25" lengthAdjust="spacingAndGlyphs" class="n">0</text>
<text x="5.40" y="307.00" textLength="8.14" lengthAdjust="spacingAndGlyphs" class="n">12</text>
<text x="29.40" y="307.00" textLength="62.30" lengthAdjust="spacingAndGlyphs" class="n w">2765702,000000...</text>
<text x="150.45" y="307.00" textLength="12.75" lengthAdjust="spacingAndGlyphs" class="n w">364</text>
<text x="229.15" y="307.00" textLength="4.25" lengthAdjust="spacingAndGlyphs" class="n w">1</text>
<text x="299.15" y="307.00" textLength="4.25" lengthAdjust="spacingAndGlyphs" class="n w">1</text>
<text x="308.70" y="307.00" textLength="5.40" lengthAdjust="spacingAndGlyphs" class="w">X</text>
<text x="379.30" y="307.00" textLength="63.60" lengthAdjust="spacingAndGlyphs" class="w">Dépôts anthrop...</text>
<text x="510.15" y="307.00" textLength="4.25" lengthAdjust="spacingAndGlyphs" class="n w">0</text>
<text x="580.15" y="307.00" textLength="4.25" lengthAdjust="spacingAndGlyphs" class="n w">0</text>
<text x="650.75" y="307.00" textLength="4.25" lengthAdjust="spacingAndGlyphs" class="n w">0</text>
<text x="721.55" y="307.00" textLength="4.25" lengthAdjust="spacingAndGlyphs" class="n w">0</text>
<text x="5.40" y="328.00" textLength="8.14" lengthAdjust="spacingAndGlyphs" class="n">13</text>
<text x="29.40" y="328.00" textLength="62.30" lengthAdjust="spacingAndGlyphs" class="n w">2765401,000000...</text>
<text x="150.45" y="328.00" textLength="12.75" lengthAdjust="spacingAndGlyphs" class="n w">364</text>
<text x="229.15" y="328.00" textLength="4.25" lengthAdjust="spacingAndGlyphs" class="n w">1</text>
<text x="299.15" y="328.00" textLength="4.25" lengthAdjust="spacingAndGlyphs" class="n w">1</text>
<text x="308.70" y="328.00" textLength="5.40" lengthAdjust="spacingAndGlyphs" class="w">X</text>
<text x="379.30" y="328.00" textLength="63.60" lengthAdjust="spacingAndGlyphs" class="w">Dépôts anthrop...</text>
<text x="510.15" y="328.00" textLength="4.25" lengthAdjust="spacingAndGlyphs" class="n w">0</text>
<text x="580.15" y="328.00" textLength="4.25" lengthAdjust="spacingAndGlyphs" class="n w">0</text>
<text x="650.75" y="328.00" textLength="4.25" lengthAdjust="spacingAndGlyphs" class="n w">0</text>
<text x="721.55" y="328.00" textLength="4.25" lengthAdjust="spacingAndGlyphs" class="n w">0</text>
<text x="5.40" y="349.00" textLength="8.14" lengthAdjust="spacingAndGlyphs" class="n">14</text>
<text x="29.40" y="349.00" textLength="62.30" lengthAdjust="spacingAndGlyphs" class="n">2764376,000000...</text>
<text x="150.45" y="349.00" textLength="12.75" lengthAdjust="spacingAndGlyphs" class="n">364</text>
<text x="229.15" y="349.00" textLength="4.25" lengthAdjust="spacingAndGlyphs" class="n">1</text>
<text x="299.15" y="349.00" textLength="4.25" lengthAdjust="spacingAndGlyphs" class="n">1</text>
<text x="308.70" y="349.00" textLength="5.40" lengthAdjust="spacingAndGlyphs">X</text>
<text x="379.30" y="349.00" textLength="63.60" lengthAdjust="spacingAndGlyphs">Dépôts anthrop...</text>
<text x="510.15" y="349.00" textLength="4.25" lengthAdjust="spacingAndGlyphs" class="n">0</text>
<text x="580.15" y="349.00" textLength="4.25" lengthAdjust="spacingAndGlyphs" class="n">0</text>
<text x="650.75" y="349.00" textLength="4.25" lengthAdjust="spacingAndGlyphs" class="n">0</text>
<text x="721.55" y="349.00" textLength="4.25" lengthAdjust="spacingAndGlyphs" class="n">0</text>
<text x="5.40" y="371.00" textLength="8.14" lengthAdjust="spacingAndGlyphs" class="n">15</text>
<text x="29.40" y="371.00" textLength="62.30" lengthAdjust="spacingAndGlyphs" class="n">2764720,000000...</text>
<text x="150.45" y="371.00" textLength="12.75" lengthAdjust="spacingAndGlyphs" class="n">364</text>
<text x="229.15" y="371.00" textLength="4.25" lengthAdjust="spacingAndGlyphs" class="n">1</text>
<text x="299.15" y="371.00" textLength="4.25" lengthAdjust="spacingAndGlyphs" class="n">1</text>
<text x="308.70" y="371.00" textLength="5.40" lengthAdjust="spacingAndGlyphs">X</text>
<text x="379.30" y="371.00" textLength="63.60" lengthAdjust="spacingAndGlyphs">Dépôts anthrop...</text>
<text x="510.15" y="371.00" textLength="4.25" lengthAdjust="spacingAndGlyphs" class="n">0</text>
<text x="580.15" y="371.00" textLength="4.25" lengthAdjust="spacingAndGlyphs" class="n">0</text>
<text x="650.75" y="371.00" textLength="4.25" lengthAdjust="spacingAndGlyphs" class="n">0</text>
<text x="721.55" y="371.00" textLength="4.25" lengthAdjust="spacingAndGlyphs" class="n">0</text>
<text x="5.40" y="392.00" textLength="8.14" lengthAdjust="spacingAndGlyphs" class="n">16</text>
<text x="29.40" y="392.00" textLength="62.30" lengthAdjust="spacingAndGlyphs" class="n">2764975,000000...</text>
<text x="150.45" y="392.00" textLength="12.75" lengthAdjust="spacingAndGlyphs" class="n">364</text>
<text x="229.15" y="392.00" textLength="4.25" lengthAdjust="spacingAndGlyphs" class="n">1</text>
<text x="299.15" y="392.00" textLength="4.25" lengthAdjust="spacingAndGlyphs" class="n">1</text>
<text x="308.70" y="392.00" textLength="5.40" lengthAdjust="spacingAndGlyphs">X</text>
<text x="379.30" y="392.00" textLength="63.60" lengthAdjust="spacingAndGlyphs">Dépôts anthrop...</text>
<text x="510.15" y="392.00" textLength="4.25" lengthAdjust="spacingAndGlyphs" class="n">0</text>
<text x="580.15" y="392.00" textLength="4.25" lengthAdjust="spacingAndGlyphs" class="n">0</text>
<text x="650.75" y="392.00" textLength="4.25" lengthAdjust="spacingAndGlyphs" class="n">0</text>
<text x="721.55" y="392.00" textLength="4.25" lengthAdjust="spacingAndGlyphs" class="n">0</text>
<text x="5.40" y="413.00" textLength="8.14" lengthAdjust="spacingAndGlyphs" class="n">17</text>
<text x="29.40" y="413.00" textLength="62.30" lengthAdjust="spacingAndGlyphs" class="n w">2765555,000000...</text>
<text x="150.45" y="413.00" textLength="12.75" lengthAdjust="spacingAndGlyphs" class="n w">364</text>
<text x="229.15" y="413.00" textLength="4.25" lengthAdjust="spacingAndGlyphs" class="n w">1</text>
<text x="299.15" y="413.00" textLength="4.25" lengthAdjust="spacingAndGlyphs" class="n w">1</text>
<text x="308.70" y="413.00" textLength="5.40" lengthAdjust="spacingAndGlyphs" class="w">X</text>
<text x="379.30" y="413.00" textLength="63.60" lengthAdjust="spacingAndGlyphs" class="w">Dépôts anthrop...</text>
<text x="510.15" y="413.00" textLength="4.25" lengthAdjust="spacingAndGlyphs" class="n w">0</text>
<text x="580.15" y="413.00" textLength="4.25" lengthAdjust="spacingAndGlyphs" class="n w">0</text>
<text x="650.75" y="413.00" textLength="4.25" lengthAdjust="spacingAndGlyphs" class="n w">0</text>
<text x="721.55" y="413.00" textLength="4.25" lengthAdjust="spacingAndGlyphs" class="n w">0</text>
<text x="5.40" y="434.00" textLength="8.14" lengthAdjust="spacingAndGlyphs" class="n">18</text>
<text x="29.40" y="434.00" textLength="62.30" lengthAdjust="spacingAndGlyphs" class="n">2764967,000000...</text>
<text x="150.45" y="434.00" textLength="12.75" lengthAdjust="spacingAndGlyphs" class="n">364</text>
<text x="229.15" y="434.00" textLength="4.25" lengthAdjust="spacingAndGlyphs" class="n">1</text>
<text x="299.15" y="434.00" textLength="4.25" lengthAdjust="spacingAndGlyphs" class="n">1</text>
<text x="308.70" y="434.00" textLength="5.40" lengthAdjust="spacingAndGlyphs">X</text>
<text x="379.30" y="434.00" textLength="63.60" lengthAdjust="spacingAndGlyphs">Dépôts anthrop...</text>
<text x="510.15" y="434.00" textLength="4.25" lengthAdjust="spacingAndGlyphs" class="n">0</text>
<text x="580.15" y="434.00" textLength="4.25" lengthAdjust="spacingAndGlyphs" class="n">0</text>
<text x="650.75" y="434.00" textLength="4.25" lengthAdjust="spacingAndGlyphs" class="n">0</text>
<text x="721.55" y="434.00" textLength="4.25" lengthAdjust="spacingAndGlyphs" class="n">0</text>
<text x="5.40" y="455.00" textLength="8.14" lengthAdjust="spacingAndGlyphs" class="n">19</text>
<text x="29.40" y="455.00" textLength="62.30" lengthAdjust="spacingAndGlyphs" class="n">2765552,000000...</text>
<text x="150.45" y="455.00" textLength="12.75" lengthAdjust="spacingAndGlyphs" class="n">364</text>
<text x="229.15" y="455.00" textLength="4.25" lengthAdjust="spacingAndGlyphs" class="n">1</text>
<text x="299.15" y="455.00" textLength="4.25" lengthAdjust="spacingAndGlyphs" class="n">1</text>
<text x="308.70" y="455.00" textLength="5.40" lengthAdjust="spacingAndGlyphs">X</text>
<text x="379.30" y="455.00" textLength="63.60" lengthAdjust="spacingAndGlyphs">Dépôts anthrop...</text>
<text x="510.15" y="455.00" textLength="4.25" lengthAdjust="spacingAndGlyphs" class="n">0</text>
<text x="580.15" y="455.00" textLength="4.25" lengthAdjust="spacingAndGlyphs" class="n">0</text>
<text x="650.75" y="455.00" textLength="4.25" lengthAdjust="spacingAndGlyphs" class="n">0</text>
<text x="721.55" y="455.00" textLength="4.25" lengthAdjust="spacingAndGlyphs" class="n">0</text>
<text x="5.40" y="476.00" textLength="8.14" lengthAdjust="spacingAndGlyphs" class="n">20</text>
<text x="29.40" y="476.00" textLength="62.30" lengthAdjust="spacingAndGlyphs" class="n">2765365,000000...</text>
<text x="150.45" y="476.00" textLength="12.75" lengthAdjust="spacingAndGlyphs" class="n">364</text>
<text x="229.15" y="476.00" textLength="4.25" lengthAdjust="spacingAndGlyphs" class="n">1</text>
<text x="299.15" y="476.00" textLength="4.25" lengthAdjust="spacingAndGlyphs" class="n">1</text>
<text x="308.70" y="476.00" textLength="5.40" lengthAdjust="spacingAndGlyphs">X</text>
<text x="379.30" y="476.00" textLength="63.60" lengthAdjust="spacingAndGlyphs">Dépôts anthrop...</text>
<text x="510.15" y="476.00" textLength="4.25" lengthAdjust="spacingAndGlyphs" class="n">0</text>
<text x="580.15" y="476.00" textLength="4.25" lengthAdjust="spacingAndGlyphs" class="n">0</text>
<text x="650.75" y="476.00" textLength="4.25" lengthAdjust="spacingAndGlyphs" class="n">0</text>
<text x="721.55" y="476.00" textLength="4.25" lengthAdjust="spacingAndGlyphs" class="n">0</text>
<text x="5.40" y="497.00" textLength="8.14" lengthAdjust="spacingAndGlyphs" class="n">21</text>
<text x="29.40" y="497.00" textLength="62.30" lengthAdjust="spacingAndGlyphs" class="n">2765137,000000...</text>
<text x="150.45" y="497.00" textLength="12.75" lengthAdjust="spacingAndGlyphs" class="n">364</text>
<text x="229.15" y="497.00" textLength="4.25" lengthAdjust="spacingAndGlyphs" class="n">1</text>
<text x="299.15" y="497.00" textLength="4.25" lengthAdjust="spacingAndGlyphs" class="n">1</text>
<text x="308.70" y="497.00" textLength="5.40" lengthAdjust="spacingAndGlyphs">X</text>
<text x="379.30" y="497.00" textLength="63.60" lengthAdjust="spacingAndGlyphs">Dépôts anthrop...</text>
<text x="510.15" y="497.00" textLength="4.25" lengthAdjust="spacingAndGlyphs" class="n">0</text>
<text x="580.15" y="497.00" textLength="4.25" lengthAdjust="spacingAndGlyphs" class="n">0</text>
<text x="650.75" y="497.00" textLength="4.25" lengthAdjust="spacingAndGlyphs" class="n">0</text>
<text x="721.55" y="497.00" textLength="4.25" lengthAdjust="spacingAndGlyphs" class="n">0</text>
<text x="5.40" y="518.00" textLength="8.14" lengthAdjust="spacingAndGlyphs" class="n">22</text>
<text x="29.40" y="518.00" textLength="62.30" lengthAdjust="spacingAndGlyphs" class="n">2765622,000000...</text>
<text x="150.45" y="518.00" textLength="12.75" lengthAdjust="spacingAndGlyphs" class="n">364</text>
<text x="229.15" y="518.00" textLength="4.25" lengthAdjust="spacingAndGlyphs" class="n">1</text>
<text x="299.15" y="518.00" textLength="4.25" lengthAdjust="spacingAndGlyphs" class="n">1</text>
<text x="308.70" y="518.00" textLength="5.40" lengthAdjust="spacingAndGlyphs">X</text>
<text x="379.30" y="518.00" textLength="63.60" lengthAdjust="spacingAndGlyphs">Dépôts anthrop...</text>
<text x="510.15" y="518.00" textLength="4.25" lengthAdjust="spacingAndGlyphs" class="n">0</text>
<text x="580.15" y="518.00" textLength="4.25" lengthAdjust="spacingAndGlyphs" class="n">0</text>
<text x="650.75" y="518.00" textLength="4.25" lengthAdjust="spacingAndGlyphs" class="n">0</text>
<text x="721.55" y="518.00" textLength="4.25" lengthAdjust="spacingAndGlyphs" class="n">0</text>
</g>
<g>
<!-- QGIS logo -->
<g>
<circle cx="13.4" cy="14.8" r="4.4" fill="none" stroke="#6d9d2e" stroke-width="1.8"/>
<path d="M13.7 15.6 L15.0 14.6 L19.3 18.7 L17.6 20.0 Z" fill="#5f9628"/>
<circle cx="13.2" cy="14.9" r="1.15" fill="#f2a64a"/>
</g>
<!-- pencil disabled -->
<path d="M9.3 41.6 L10.2 38.4 L14.2 32.2 L16.5 33.6 L12.4 39.8 Z" fill="#d6d4d0"/>
<!-- multiedit disabled -->
<rect x="26" y="32.4" width="10" height="9" rx="0.8" fill="#d5d3cf"/>
<path d="M28 40.4 L33.2 33 M30.4 41 L35.4 34" stroke="#e9e8e5" stroke-width="1" fill="none"/>
<!-- save disabled -->
<rect x="43" y="31.8" width="10.4" height="9.6" rx="1" fill="#d7d5d1"/>
<rect x="45" y="33" width="6.4" height="2.8" fill="#e8e7e4"/>
<rect x="45.4" y="37.6" width="5.6" height="3.8" fill="#e3e2df"/>
<!-- refresh -->
<g fill="none" stroke="#3b78bf" stroke-width="2.9">
<path d="M62.9 36.2 A3.6 3.6 0 0 1 68.6 33.6"/>
<path d="M69.7 36.6 A3.6 3.6 0 0 1 64 39.4"/>
</g>
<path d="M66.2 35.6 L71.6 36 L71.4 31.2 Z" fill="#3b78bf"/>
<path d="M66.4 37.2 L61 36.8 L61.2 41.6 Z" fill="#3b78bf"/>
<!-- sep -->
<rect x="77" y="33.4" width="0.8" height="7.4" fill="#d4d4d4"/>
<!-- copy disabled -->
<g fill="#e4e3e1" stroke="#bcbbb9" stroke-width="1">
<path d="M86.6 32.6 h4 l1.8 1.8 v5 h-5.8 z"/>
<path d="M84.2 34.6 h4 l1.8 1.8 v4.8 h-5.8 z"/>
</g>
<rect x="99.4" y="33.4" width="0.8" height="7.4" fill="#d4d4d4"/>
<!-- expression select -->
<rect x="109.3" y="33.8" width="7" height="7.4" rx="0.6" fill="#f6e44e" stroke="#e3cc33" stroke-width="0.8"/>
<path d="M111.6 32.7 C110.2 31.6 107.6 32.1 107.8 33.6 C107.9 34.6 109 35 110 35 C108.6 35 107.2 35.6 107.3 36.8 C107.4 38.4 110.4 38.6 111.8 37.3" fill="none" stroke="#f4f4f4" stroke-width="2.6"/>
<path d="M111.6 32.7 C110.2 31.6 107.6 32.1 107.8 33.6 C107.9 34.6 109 35 110 35 C108.6 35 107.2 35.6 107.3 36.8 C107.4 38.4 110.4 38.6 111.8 37.3" fill="none" stroke="#4a2c58" stroke-width="1.0"/>
<!-- select all -->
<g fill="#f6e44e" stroke="#e6cf33" stroke-width="0.7">
<rect x="124" y="32.2" width="9.6" height="2.7" rx="0.7"/>
<rect x="124" y="35.4" width="9.6" height="2.7" rx="0.7"/>
<rect x="124" y="38.6" width="9.6" height="2.7" rx="0.7"/>
</g>
<!-- invert selection -->
<rect x="141.3" y="32.3" width="9.8" height="9" rx="0.6" fill="#ececec" stroke="#c4c4c4" stroke-width="0.8"/>
<path d="M141.3 32.3 L151.1 41.3 L141.3 41.3 Z" fill="#f6e44e" stroke="#e6cf33" stroke-width="0.6"/>
<!-- deselect -->
<rect x="159" y="32.2" width="7" height="6.6" rx="0.5" fill="#f6e44e" stroke="#e6cf33" stroke-width="0.8"/>
<path d="M165 37.4 L170 42 M170 37.4 L165 42" stroke="#e2505c" stroke-width="1.5" fill="none"/>
<!-- filter -->
<path d="M176.6 32.6 H187.6 L183.8 37 V41.8 L180.4 40.6 V37 Z" fill="#3f7cc2"/>
<rect x="176.6" y="31.4" width="11" height="1.8" rx="0.8" fill="#e9d54a"/>
<!-- move selection to top -->
<rect x="194.4" y="32" width="9.8" height="9.4" fill="#4f86cc"/>
<rect x="194.4" y="38" width="9.8" height="3.4" fill="#d9d98e"/>
<path d="M199.3 33 L201.8 35.6 H200 V39.6 H198.6 V35.6 H196.8 Z" fill="#1d3f78"/>
<!-- pan to selection -->
<path d="M211.6 32.2 L214.4 32 L221 38.6 L219 40.6 L216.4 38 L214 40.6 L212 38.6 L214.6 36 L211.4 34.6 Z" fill="#f1e04a"/>
<path d="M219.4 33.4 L221 35 L218 37.4 L216.4 36 Z" fill="#f1e04a"/>
<g fill="#5b89b8">
<path d="M216.5 31 L218.5 33 L216.5 35 L214.5 33 Z"/>
<path d="M216.5 38.6 L218.5 40.6 L216.5 42.6 L214.5 40.6 Z"/>
<path d="M212.6 34.8 L214.6 36.8 L212.6 38.8 L210.6 36.8 Z"/>
<path d="M220.4 34.8 L222.4 36.8 L220.4 38.8 L218.4 36.8 Z"/>
</g>
<!-- zoom to selection -->
<rect x="228.7" y="32.2" width="3.4" height="6.4" rx="0.5" fill="#f0dc48"/>
<path d="M232.4 38.6 L229 41.2" stroke="#d9bd45" stroke-width="1.7" fill="none"/>
<circle cx="232.5" cy="38.3" r="0.9" fill="#222"/>
<circle cx="236.3" cy="35.2" r="3.7" fill="#fbfbf4" stroke="#8c8c8c" stroke-width="0.8"/>
<rect x="244.8" y="33.4" width="0.8" height="7.4" fill="#d4d4d4"/>
<!-- copy cell disabled -->
<rect x="252.2" y="32" width="9.6" height="9.4" rx="0.6" fill="#e0dfdc"/>
<rect x="254.6" y="31.5" width="1.7" height="9.9" fill="#cfcdc9"/>
<rect x="257.6" y="37.3" width="4.8" height="4.7" rx="1" fill="#f4f4f3" stroke="#cdcbc8" stroke-width="0.8"/>
<rect x="269.4" y="32" width="9.6" height="9.4" rx="0.6" fill="#e0dfdc"/>
<rect x="271.8" y="31.5" width="1.7" height="9.9" fill="#cfcdc9"/>
<rect x="274.8" y="37.3" width="4.8" height="4.7" rx="1" fill="#f4f4f3" stroke="#cdcbc8" stroke-width="0.8"/>
<!-- field calc -->
<rect x="287.2" y="32.2" width="9.8" height="9.4" rx="0.6" fill="#b5cfec" stroke="#9dbfe6" stroke-width="0.6"/>
<path d="M288.6 41.6 L289.4 38.6 L294.2 31.2 L296.2 32.4 L291.4 39.9 Z" fill="#d8804a"/>
<path d="M293.4 32.4 L294.2 31.2 L296.2 32.4 L295.4 33.6 Z" fill="#e8a982"/>
<path d="M288.6 41.6 L289.2 39.4 L290.6 40.3 Z" fill="#4a3428"/>
<!-- new field table -->
<rect x="304.4" y="32.2" width="10" height="9.4" fill="#f5f5f5" stroke="#8c8c8c" stroke-width="0.7"/>
<rect x="304.8" y="32.6" width="9.2" height="1.7" fill="#e07272"/>
<rect x="305" y="35.5" width="8.8" height="1" fill="#8fcb8f"/>
<rect x="305" y="37.5" width="8.8" height="1" fill="#86aee0"/>
<rect x="304.6" y="39.7" width="9.6" height="1.6" fill="#747474"/>
<rect x="307.5" y="32.6" width="0.5" height="8.6" fill="#c4c4c4"/>
<rect x="310.9" y="32.6" width="0.5" height="8.6" fill="#c4c4c4"/>
<rect x="320.4" y="33.4" width="0.8" height="7.4" fill="#d4d4d4"/>
<!-- conditional formatting -->
<rect x="326.8" y="32.3" width="10.2" height="2.6" rx="0.6" fill="#f7f7f7" stroke="#b4b4b4" stroke-width="0.6"/>
<rect x="331" y="32.9" width="5.4" height="1.4" fill="#6e6e6e"/>
<rect x="326.8" y="35.5" width="10.2" height="2.8" rx="0.6" fill="#64bd72" stroke="#4dab5d" stroke-width="0.6"/>
<circle cx="328.6" cy="36.9" r="0.8" fill="#eef8ef"/>
<rect x="326.8" y="38.9" width="10.2" height="2.6" rx="0.6" fill="#f8f1f1" stroke="#d9bcbc" stroke-width="0.6"/>
<circle cx="328.6" cy="40.2" r="0.8" fill="#d85a5a"/>
<rect x="343.2" y="33.4" width="0.8" height="7.4" fill="#d4d4d4"/>
<!-- magnifier -->
<path d="M356 38.6 L360 42" stroke="#8c8c8c" stroke-width="1.7" fill="none"/>
<circle cx="353.6" cy="35.9" r="3.6" fill="#dfe8f3" stroke="#8494a6" stroke-width="1.1"/>
<circle cx="353.6" cy="35.9" r="2" fill="#3873c4"/>
<circle cx="353.6" cy="35.9" r="0.8" fill="#ffffff"/>
<!-- dock -->
<rect x="367.2" y="32.4" width="9.4" height="9" rx="0.8" fill="#c9d9ec" stroke="#a4afbc" stroke-width="0.7"/>
<rect x="367.4" y="32.4" width="9" height="1.7" fill="#676c73"/>
<rect x="368.6" y="36" width="2.8" height="4" fill="#e9f1fa"/>
<rect x="372.4" y="36" width="2.8" height="4" fill="#e9f1fa"/>
</g>

</g></svg></body></html>
